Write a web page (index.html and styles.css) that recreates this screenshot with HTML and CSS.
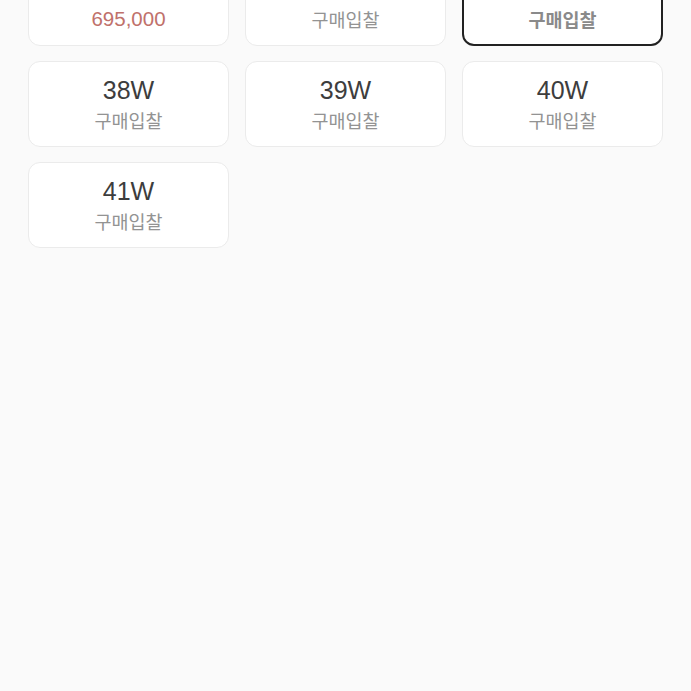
FILE: index.html
```html
<!DOCTYPE html>
<html lang="ko">
  <head>
    <meta charset="UTF-8" />
    <meta name="viewport" content="width=device-width, initial-scale=1.0" />
    <title>사이즈 선택</title>
    <link rel="stylesheet" href="styles.css">
  </head>
  <body>
    <!-- Size grid -->
    <div class="size-grid">
      <button class="size-card">
        <span class="size-name">37W</span>
        <span class="size-price">695,000</span>
      </button>
      <button class="size-card">
        <span class="size-name">37.5W</span>
        <span class="size-label">구매입찰</span>
      </button>
      <button class="size-card selected">
        <span class="size-name">37.5R</span>
        <span class="size-label">구매입찰</span>
      </button>
      <button class="size-card">
        <span class="size-name">38W</span>
        <span class="size-label">구매입찰</span>
      </button>
      <button class="size-card">
        <span class="size-name">39W</span>
        <span class="size-label">구매입찰</span>
      </button>
      <button class="size-card">
        <span class="size-name">40W</span>
        <span class="size-label">구매입찰</span>
      </button>
      <button class="size-card">
        <span class="size-name">41W</span>
        <span class="size-label">구매입찰</span>
      </button>
    </div>
  </body>
</html>
```

FILE: styles.css
```css
/* Reset and base styles */
* {
  margin: 0;
  padding: 0;
  box-sizing: border-box;
  font-family: "Liberation Sans", "Noto Sans CJK KR", sans-serif;
}

body {
  background-color: #fafafa;
  min-height: 100vh;
  overflow: hidden;
}

/* Size grid (scrolled, first row partly hidden) */
.size-grid {
  display: grid;
  grid-template-columns: repeat(3, 1fr);
  gap: 15px 16px;
  padding: 0 28px;
  margin-top: -40px;
}

.size-card {
  height: 86px;
  background-color: white;
  border: 1px solid #ebebeb;
  border-radius: 12px;
  display: flex;
  flex-direction: column;
  align-items: center;
  padding-top: 13px;
  cursor: pointer;
}

.size-card.selected {
  border: 2px solid #222;
  padding-top: 12px;
}

.size-name {
  font-size: 25px;
  line-height: 30px;
  color: #3d3d3d;
}

.size-label {
  font-family: "Noto Sans CJK KR", sans-serif;
  font-size: 18.5px;
  line-height: 30px;
  color: #939393;
}

.size-card.selected .size-label {
  font-weight: 700;
  color: #8a8a8a;
}

.size-price {
  font-size: 20.5px;
  line-height: 30px;
  color: #c0716b;
}
```
